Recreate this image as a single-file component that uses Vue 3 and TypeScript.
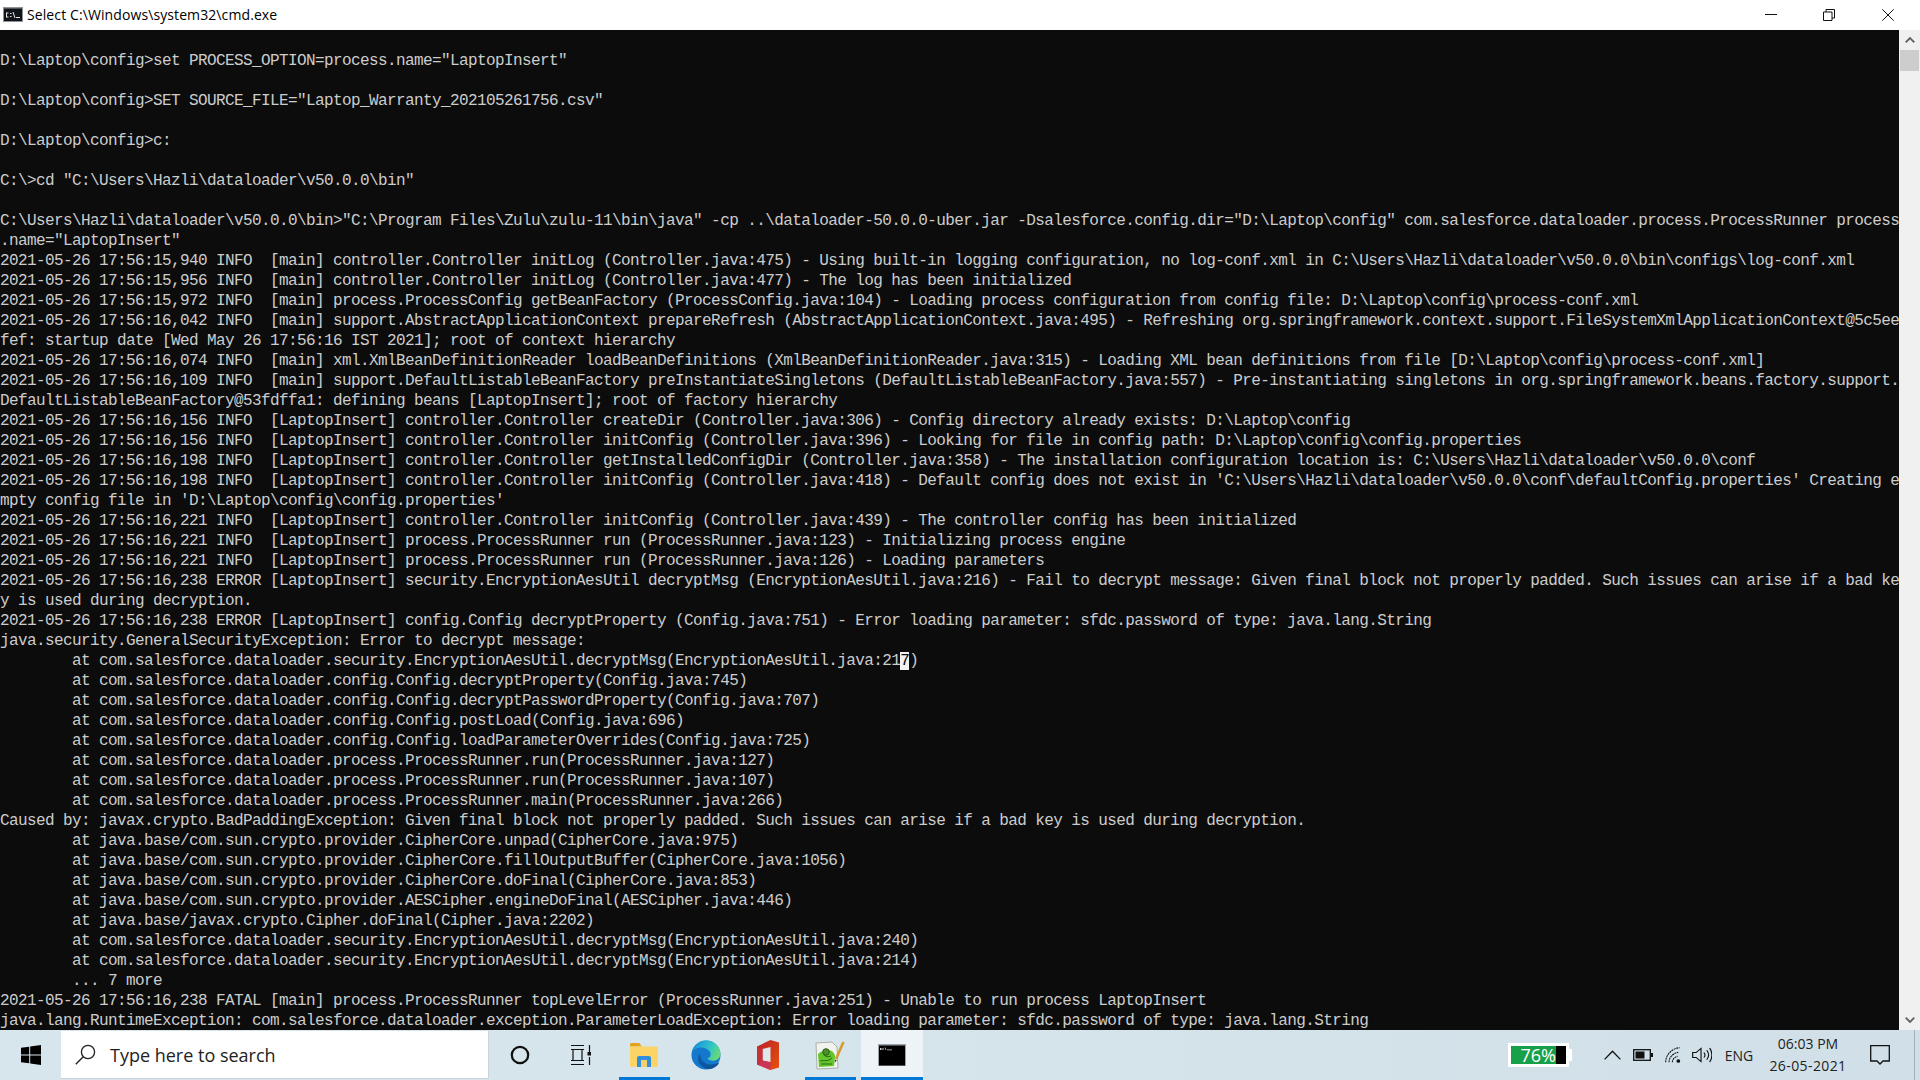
<script setup lang="ts">
const raw: string[] = [
  '',
  String.raw`D:\Laptop\config>set PROCESS_OPTION=process.name="LaptopInsert"`,
  '',
  String.raw`D:\Laptop\config>SET SOURCE_FILE="Laptop_Warranty_202105261756.csv"`,
  '',
  String.raw`D:\Laptop\config>c:`,
  '',
  String.raw`C:\>cd "C:\Users\Hazli\dataloader\v50.0.0\bin"`,
  '',
  String.raw`C:\Users\Hazli\dataloader\v50.0.0\bin>"C:\Program Files\Zulu\zulu-11\bin\java" -cp ..\dataloader-50.0.0-uber.jar -Dsalesforce.config.dir="D:\Laptop\config" com.salesforce.dataloader.process.ProcessRunner process`,
  String.raw`.name="LaptopInsert"`,
  String.raw`2021-05-26 17:56:15,940 INFO  [main] controller.Controller initLog (Controller.java:475) - Using built-in logging configuration, no log-conf.xml in C:\Users\Hazli\dataloader\v50.0.0\bin\configs\log-conf.xml`,
  String.raw`2021-05-26 17:56:15,956 INFO  [main] controller.Controller initLog (Controller.java:477) - The log has been initialized`,
  String.raw`2021-05-26 17:56:15,972 INFO  [main] process.ProcessConfig getBeanFactory (ProcessConfig.java:104) - Loading process configuration from config file: D:\Laptop\config\process-conf.xml`,
  String.raw`2021-05-26 17:56:16,042 INFO  [main] support.AbstractApplicationContext prepareRefresh (AbstractApplicationContext.java:495) - Refreshing org.springframework.context.support.FileSystemXmlApplicationContext@5c5ee`,
  String.raw`fef: startup date [Wed May 26 17:56:16 IST 2021]; root of context hierarchy`,
  String.raw`2021-05-26 17:56:16,074 INFO  [main] xml.XmlBeanDefinitionReader loadBeanDefinitions (XmlBeanDefinitionReader.java:315) - Loading XML bean definitions from file [D:\Laptop\config\process-conf.xml]`,
  String.raw`2021-05-26 17:56:16,109 INFO  [main] support.DefaultListableBeanFactory preInstantiateSingletons (DefaultListableBeanFactory.java:557) - Pre-instantiating singletons in org.springframework.beans.factory.support.`,
  String.raw`DefaultListableBeanFactory@53fdffa1: defining beans [LaptopInsert]; root of factory hierarchy`,
  String.raw`2021-05-26 17:56:16,156 INFO  [LaptopInsert] controller.Controller createDir (Controller.java:306) - Config directory already exists: D:\Laptop\config`,
  String.raw`2021-05-26 17:56:16,156 INFO  [LaptopInsert] controller.Controller initConfig (Controller.java:396) - Looking for file in config path: D:\Laptop\config\config.properties`,
  String.raw`2021-05-26 17:56:16,198 INFO  [LaptopInsert] controller.Controller getInstalledConfigDir (Controller.java:358) - The installation configuration location is: C:\Users\Hazli\dataloader\v50.0.0\conf`,
  String.raw`2021-05-26 17:56:16,198 INFO  [LaptopInsert] controller.Controller initConfig (Controller.java:418) - Default config does not exist in 'C:\Users\Hazli\dataloader\v50.0.0\conf\defaultConfig.properties' Creating e`,
  String.raw`mpty config file in 'D:\Laptop\config\config.properties'`,
  String.raw`2021-05-26 17:56:16,221 INFO  [LaptopInsert] controller.Controller initConfig (Controller.java:439) - The controller config has been initialized`,
  String.raw`2021-05-26 17:56:16,221 INFO  [LaptopInsert] process.ProcessRunner run (ProcessRunner.java:123) - Initializing process engine`,
  String.raw`2021-05-26 17:56:16,221 INFO  [LaptopInsert] process.ProcessRunner run (ProcessRunner.java:126) - Loading parameters`,
  String.raw`2021-05-26 17:56:16,238 ERROR [LaptopInsert] security.EncryptionAesUtil decryptMsg (EncryptionAesUtil.java:216) - Fail to decrypt message: Given final block not properly padded. Such issues can arise if a bad ke`,
  String.raw`y is used during decryption.`,
  String.raw`2021-05-26 17:56:16,238 ERROR [LaptopInsert] config.Config decryptProperty (Config.java:751) - Error loading parameter: sfdc.password of type: java.lang.String`,
  String.raw`java.security.GeneralSecurityException: Error to decrypt message:`,
  '        at com.salesforce.dataloader.security.EncryptionAesUtil.decryptMsg(EncryptionAesUtil.java:217)',
  '        at com.salesforce.dataloader.config.Config.decryptProperty(Config.java:745)',
  '        at com.salesforce.dataloader.config.Config.decryptPasswordProperty(Config.java:707)',
  '        at com.salesforce.dataloader.config.Config.postLoad(Config.java:696)',
  '        at com.salesforce.dataloader.config.Config.loadParameterOverrides(Config.java:725)',
  '        at com.salesforce.dataloader.process.ProcessRunner.run(ProcessRunner.java:127)',
  '        at com.salesforce.dataloader.process.ProcessRunner.run(ProcessRunner.java:107)',
  '        at com.salesforce.dataloader.process.ProcessRunner.main(ProcessRunner.java:266)',
  'Caused by: javax.crypto.BadPaddingException: Given final block not properly padded. Such issues can arise if a bad key is used during decryption.',
  '        at java.base/com.sun.crypto.provider.CipherCore.unpad(CipherCore.java:975)',
  '        at java.base/com.sun.crypto.provider.CipherCore.fillOutputBuffer(CipherCore.java:1056)',
  '        at java.base/com.sun.crypto.provider.CipherCore.doFinal(CipherCore.java:853)',
  '        at java.base/com.sun.crypto.provider.AESCipher.engineDoFinal(AESCipher.java:446)',
  '        at java.base/javax.crypto.Cipher.doFinal(Cipher.java:2202)',
  '        at com.salesforce.dataloader.security.EncryptionAesUtil.decryptMsg(EncryptionAesUtil.java:240)',
  '        at com.salesforce.dataloader.security.EncryptionAesUtil.decryptMsg(EncryptionAesUtil.java:214)',
  '        ... 7 more',
  '2021-05-26 17:56:16,238 FATAL [main] process.ProcessRunner topLevelError (ProcessRunner.java:251) - Unable to run process LaptopInsert',
  'java.lang.RuntimeException: com.salesforce.dataloader.exception.ParameterLoadException: Error loading parameter: sfdc.password of type: java.lang.String',
]
const cursorRow = 31
const cursorCol = raw[cursorRow].indexOf('217)') + 2
</script>

<template>
  <div class="screen">
    <header class="titlebar">
      <svg class="app-icon" viewBox="0 0 20 15" aria-hidden="true">
        <rect width="20" height="15" fill="#8e9499" />
        <rect x="1" y="1.5" width="18" height="12.5" fill="#101418" />
        <path d="M3 5.5h2.5v1H4v3h1.5v1H3zM7 6h1.5v1H7zM7 9h1.5v1H7zM9.5 5l2 6h1l-2-6zM13 10h4v1h-4z" fill="#e8e8e8" />
      </svg>
      <span class="title">Select C:\Windows\system32\cmd.exe</span>
      <div class="controls">
        <span class="ctl">
          <svg viewBox="0 0 12 12" width="12" height="12"><path d="M0 5.500h12" stroke="#111" fill="none" /></svg>
        </span>
        <span class="ctl">
          <svg viewBox="0 0 12 12" width="12" height="12"><path d="M.5 3h8.5v8.5H.5zM3 3V.5h8.5V9H9" stroke="#111" fill="none" /></svg>
        </span>
        <span class="ctl">
          <svg viewBox="0 0 12 12" width="12" height="12"><path d="M.3.3l11.4 11.4M11.7.3L.3 11.7" stroke="#111" fill="none" /></svg>
        </span>
      </div>
    </header>

    <main class="window">
      <div class="console">
        <div v-for="(line, i) in raw" :key="i" class="line">
          <template v-if="i === cursorRow">{{ line.slice(0, cursorCol) }}<span class="cursor">{{ line[cursorCol] }}</span>{{ line.slice(cursorCol + 1) }}</template>
          <template v-else>{{ line }}</template>
        </div>
      </div>
      <aside class="scrollbar">
        <span class="sb-btn">
          <svg viewBox="0 0 10 6" width="10" height="6"><path d="M.7 5.300L5 1l4.300 4.300" stroke="#606060" stroke-width="1.800" fill="none" /></svg>
        </span>
        <span class="sb-thumb"></span>
        <span class="sb-track"></span>
        <span class="sb-btn">
          <svg viewBox="0 0 10 6" width="10" height="6"><path d="M.7.7L5 5 9.300.7" stroke="#606060" stroke-width="1.800" fill="none" /></svg>
        </span>
      </aside>
    </main>

    <footer class="taskbar">
      <span class="start">
        <svg viewBox="0 0 20 20" width="20" height="20"><path d="M0 2.800l8.200-1.100v7.800H0zM9.200 1.500L20 0v9.500H9.200zM0 10.500h8.200v7.800L0 17.200zM9.200 10.500H20V20L9.200 18.500z" fill="#000" /></svg>
      </span>
      <div class="search">
        <svg class="search-icon" viewBox="0 0 21 21" width="21" height="21"><circle cx="13" cy="8" r="6.600" fill="none" stroke="#222" stroke-width="1.300" /><path d="M8.200 12.800L.8 20.200" stroke="#222" stroke-width="1.400" /></svg>
        <span class="search-text">Type here to search</span>
      </div>

      <span class="tile">
        <svg viewBox="0 0 20 20" width="20" height="20"><circle cx="10" cy="10" r="8.200" fill="none" stroke="#111" stroke-width="2.200" /></svg>
      </span>
      <span class="tile">
        <svg class="taskview" viewBox="0 0 20 20" width="20" height="20"><path d="M0 .5h13M0 19.500h13M2 4.500h9v11H2zM0 15.500h13M0 4.500h13M18.500 0v7M18.500 12v8" fill="none" stroke="#111" stroke-width="1.200" /><rect x="16.500" y="7" width="3.500" height="3.500" fill="#111" /></svg>
      </span>
      <span class="tile">
        <svg viewBox="0 0 28 24" width="28" height="24">
          <path d="M0 1.500C0 .7.7 0 1.500 0h7.800l2.600 3.500H0z" fill="#e3a21a" />
          <path d="M0 3.500h26.500c.8 0 1.500.7 1.500 1.500v17.500c0 .8-.7 1.500-1.500 1.500h-25C.7 24 0 23.300 0 22.500z" fill="#fcd365" />
          <path d="M7 24v-9c0-1 .7-2 2-2h10c1.300 0 2 1 2 2v9h-4v-7h-6v7z" fill="#2f8fdc" />
          <rect x="11" y="17" width="6" height="7" fill="#f6cf6a" />
        </svg>
        <i class="mark"></i>
      </span>
      <span class="tile">
        <svg viewBox="0 0 30 30" width="30" height="30">
          <defs>
            <linearGradient id="edgeTop" x1="0" y1="0.3" x2="1" y2="0.7">
              <stop offset="0" stop-color="#1b8fdc" />
              <stop offset="0.55" stop-color="#2fc3c8" />
              <stop offset="1" stop-color="#6fdc70" />
            </linearGradient>
            <linearGradient id="edgeLow" x1="0" y1="0" x2="1" y2="1">
              <stop offset="0" stop-color="#0f5fae" />
              <stop offset="1" stop-color="#0d4f95" />
            </linearGradient>
          </defs>
          <circle cx="15" cy="15" r="14.500" fill="#1478cc" />
          <path d="M1 11.500C3 4.800 8.500.5 15.500.5c8 0 14 6.300 14 13 0 4.500-3.500 7.200-7.500 7.200-2.600 0-4.700-.8-5.700-2.100 3.800-1.200 4.300-5 2.200-7.400C14.500 6.700 6 6 1 11.500z" fill="url(#edgeTop)" />
          <path d="M9 13.500c-2.800 2.600-3 8.300 1 12 2.500 2.600 6 4 9.500 3.500 3.500-.6 7.200-2.900 8.800-6.400-2.500 1.300-5.600 2-8.500 2-5.300 0-10.400-3.900-10.800-11.100z" fill="url(#edgeLow)" />
        </svg>
      </span>
      <span class="tile">
        <svg viewBox="0 0 22 30" width="22" height="30">
          <defs>
            <linearGradient id="off" x1="0" y1="0" x2="1" y2="1">
              <stop offset="0" stop-color="#b8202a" />
              <stop offset="1" stop-color="#e8520a" />
            </linearGradient>
          </defs>
          <path d="M0 6.500L13.500 0 22 2.500v25L13.500 30 0 24.500z" fill="url(#off)" />
          <path d="M5.500 9l8-2v15l-8-1.500z" fill="#dde7ec" />
          <path d="M0 24.500l5.500-4 8 2V30z" fill="#c9365a" />
          <path d="M0 7l5.500 2v12L0 24.500z" fill="#c63038" />
        </svg>
      </span>
      <span class="tile">
        <svg viewBox="0 0 30 30" width="30" height="30">
          <path d="M1 3l16-1 5 5 1 21-21 1z" fill="#f2f3ee" stroke="#a9b0a6" />
          <path d="M3 14c3-3 7-4 11-4 4 1 6 4 6 7l-1 9-15 1z" fill="#63c62a" />
          <circle cx="11" cy="12" r="3.300" fill="#4c8f28" stroke="#2f5d1a" />
          <path d="M5 21c4-1 8 1 12-3M6 24h11M9 15c2 2 4 2 7 1" stroke="#2e6a17" fill="none" />
          <path d="M21 19L28.500 2" stroke="#d69b2d" stroke-width="2.600" fill="none" />
          <path d="M21.800 20.500l-2 2 .2-3z" fill="#333" />
        </svg>
        <i class="mark"></i>
      </span>
      <span class="tile active">
        <svg viewBox="0 0 28 22" width="28" height="22">
          <rect width="28" height="22" fill="#9aa3a8" />
          <rect x="1" y="1.500" width="26" height="20" fill="#000" />
          <path d="M2 4h1.500v2H2zM4.500 4h1v2h-1zM6.500 3.500l1 2.500h.8l-1-2.500zM9 5.500h5v.8H9z" fill="#ccc" />
        </svg>
        <i class="mark full"></i>
      </span>

      <div class="tray">
        <div class="meter">
          <div class="meter-box">
            <span class="meter-fill">76%</span>
            <span class="meter-rest"></span>
          </div>
          <i class="meter-nub"></i>
        </div>
        <span class="t-chevron">
          <svg viewBox="0 0 17 10" width="17" height="10"><path d="M.6 9.400L8.500 1.200l7.900 8.200" fill="none" stroke="#111" stroke-width="1.300" /></svg>
        </span>
        <span class="t-battery">
          <svg viewBox="0 0 20 12" width="20" height="12"><rect x=".7" y=".7" width="16.600" height="10.600" fill="none" stroke="#111" stroke-width="1.300" /><rect x="2.500" y="2.500" width="9" height="7" fill="#111" /><rect x="18" y="4" width="2" height="4" fill="#111" /></svg>
        </span>
        <span class="t-wifi">
          <svg viewBox="0 0 24 24" width="16" height="16"><g fill="none" stroke="#111" stroke-width="1.600" stroke-dasharray="3 1"><path d="M1 23C1 11 11 2 22 1" /><path d="M6 23c0-8 7-14 14-15" /><path d="M11 23c0-4 3-8 8-9" /></g><circle cx="20" cy="21" r="2.800" fill="#111" /></svg>
        </span>
        <span class="t-vol">
          <svg viewBox="0 0 21 22" width="20" height="16" preserveAspectRatio="none"><path d="M.7 7.500h3.600L9.500 2v18l-5.200-5.500H.7z" fill="none" stroke="#111" stroke-width="1.200" /><path d="M12.500 7.500c1.300 2 1.300 5 0 7M15.500 4.500c2.300 3.800 2.300 9.200 0 13M18.500 1.500c3.200 5.600 3.200 13.400 0 19" fill="none" stroke="#111" stroke-width="1.200" /></svg>
        </span>
        <span class="t-lang">ENG</span>
        <div class="t-clock">
          <span>06:03 PM</span>
          <span class="t-date">26-05-2021</span>
        </div>
        <span class="t-notif">
          <svg viewBox="0 0 20 20" width="20" height="20"><path d="M.7.7h18.600v15.300h-6.300L10 19l-3-3H.7z" fill="none" stroke="#111" stroke-width="1.300" /></svg>
        </span>
        <i class="t-desktop"></i>
      </div>
    </footer>
  </div>
</template>

<style>
html, body { margin: 0; background: #0c0c0c; overflow: hidden; }
</style>

<style scoped>
.screen {
  width: 1920px;
  height: 1080px;
  display: flex;
  flex-direction: column;
  overflow: hidden;
}

/* title bar */
.titlebar {
  height: 30px;
  flex: none;
  box-sizing: border-box;
  background: #fff;
  display: flex;
  align-items: center;
  padding-left: 3px;
  padding-bottom: 1px;
}
.app-icon { width: 20px; height: 15px; flex: none; }
.title {
  margin-left: 4px;
  font-family: "Open Sans", "Liberation Sans", sans-serif;
  font-size: 14px;
  letter-spacing: 0.1px;
  color: #000;
}
.controls { margin-left: auto; display: flex; padding-right: 3px; }
.ctl {
  width: 58px;
  height: 29px;
  display: flex;
  align-items: center;
  justify-content: center;
}
.ctl:nth-child(2) { margin-right: 1px; }

/* console */
.window { flex: 1; min-height: 0; display: flex; background: #0c0c0c; }
.console {
  width: 1899px;
  flex: none;
  box-sizing: border-box;
  padding-top: 1px;
  overflow: hidden;
  color: #cccccc;
  font-family: "Liberation Mono", "DejaVu Sans Mono", monospace;
  font-size: 16px;
  letter-spacing: -0.6px;
  line-height: 20px;
}
.line { height: 20px; white-space: pre; }
.cursor { background: #f2f2f2; color: #0c0c0c; }

.scrollbar {
  width: 21px;
  flex: none;
  background: #f0f0f0;
  display: flex;
  flex-direction: column;
  align-items: center;
}
.sb-btn { height: 20px; flex: none; display: flex; align-items: center; justify-content: center; }
.sb-thumb { width: 19px; height: 21px; flex: none; background: #cdcdcd; }
.sb-track { flex: 1; }

/* taskbar */
.taskbar {
  height: 50px;
  flex: none;
  display: flex;
  align-items: stretch;
  background: linear-gradient(90deg, #d7e5ed 0%, #d6e4eb 45%, #d1e0e8 100%);
}
.start { width: 61px; flex: none; display: flex; align-items: center; justify-content: center; }
.search {
  width: 428px;
  flex: none;
  box-sizing: border-box;
  margin-top: 1px;
  margin-bottom: 1px;
  background: #fff;
  border-right: 1px solid #c9d3d9;
  border-bottom: 1px solid #c9d3d9;
  display: flex;
  align-items: center;
  padding-left: 14px;
}
.search-icon { flex: none; }
.search-text {
  margin-left: 14px;
  font-family: "Open Sans", "Liberation Sans", sans-serif;
  font-size: 18px;
  color: #222;
}
.tile {
  width: 62px;
  flex: none;
  position: relative;
  display: flex;
  align-items: center;
  justify-content: center;
}
.taskview { margin-right: 2px; }
.tile.active { background: #edf3f6; }
.mark {
  position: absolute;
  left: 6px;
  right: 5px;
  bottom: 0;
  height: 3px;
  background: #0078d7;
}
.mark.full { left: 0; right: 0; }

.tray { margin-left: auto; display: flex; align-items: center; color: #222; }
.meter { display: flex; align-items: center; }
.meter-box {
  width: 61px;
  height: 24px;
  box-sizing: border-box;
  border: 3px solid #fff;
  display: flex;
}
.meter-fill {
  width: 45px;
  background: #17a04a;
  color: #fff;
  font-family: "Open Sans", "Liberation Sans", sans-serif;
  font-size: 18px;
  line-height: 18px;
  text-align: right;
  white-space: nowrap;
}
.meter-rest { flex: 1; background: #000; }
.meter-nub { width: 3px; height: 12px; background: #fff; display: block; }
.tray > span, .tray > div { flex: none; }
.t-chevron { width: 24px; margin-left: 28px; display: flex; justify-content: center; }
.t-battery { width: 22px; margin-left: 8px; display: flex; justify-content: center; }
.t-wifi { width: 18px; margin-left: 10px; display: flex; justify-content: center; }
.t-vol { width: 21px; margin-left: 9px; display: flex; justify-content: center; }
.t-lang {
  width: 42px;
  margin-left: 6px;
  text-align: center;
  font-family: "Open Sans", "Liberation Sans", sans-serif;
  font-size: 14px;
}
.t-clock {
  width: 92px;
  margin-left: 2px;
  display: flex;
  flex-direction: column;
  align-items: center;
  font-family: "Open Sans", "Liberation Sans", sans-serif;
  font-size: 14px;
  line-height: 22px;
}
.t-date { letter-spacing: 0.4px; }
.t-notif { width: 20px; margin-left: 16px; display: flex; }
.t-desktop {
  width: 6px;
  height: 50px;
  margin-left: 24px;
  box-sizing: border-box;
  border-left: 1px solid #a3b1ba;
  display: block;
}
</style>
